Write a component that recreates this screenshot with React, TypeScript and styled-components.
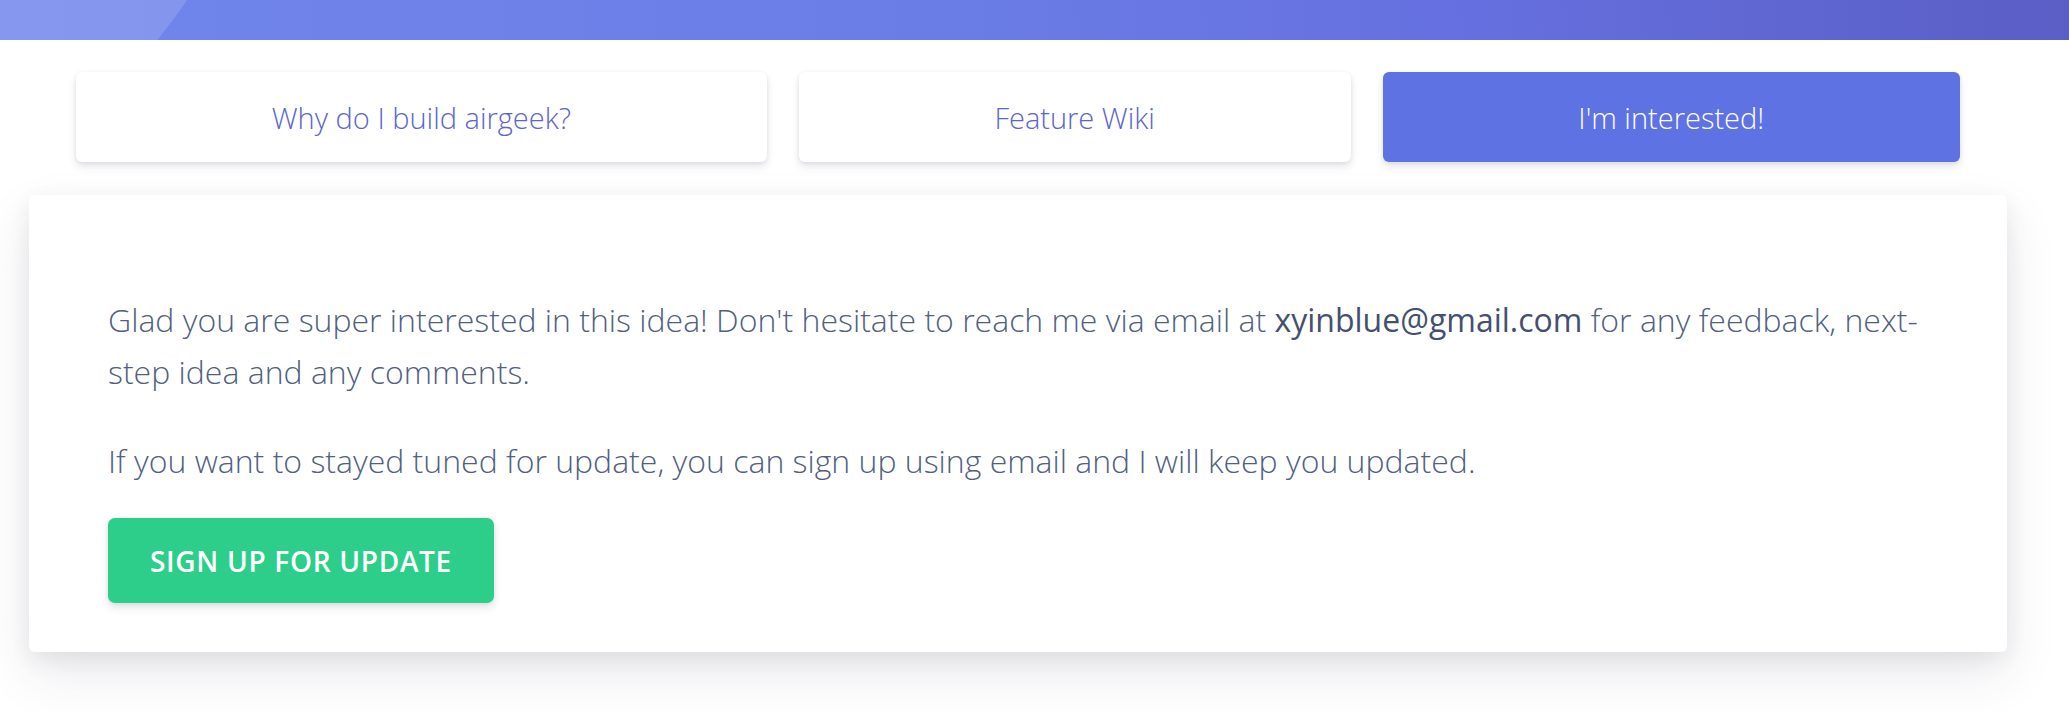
import styled, { createGlobalStyle } from 'styled-components'

const GlobalStyle = createGlobalStyle`
  body {
    margin: 0;
    background: #fff;
    font-family: 'Open Sans', 'Noto Sans', sans-serif;
    color: #525f7f;
  }
`

const Header = styled.div`
  position: relative;
  height: 40px;
  overflow: hidden;
  background: linear-gradient(87deg, #7186ed 0%, #6a7de6 45%, #6670e0 70%, #5a5ec5 100%);
`

const HeaderShape = styled.span`
  position: absolute;
  width: 900px;
  height: 900px;
  border-radius: 50%;
  left: -637px;
  top: -700px;
  background: rgba(255, 255, 255, 0.14);
`

const Section = styled.div`
  padding: 32px 62px 80px 29px;
`

const Tabs = styled.nav`
  display: flex;
  gap: 32px;
  margin: 0 47px 33px;
`

const Tab = styled.a<{ $active?: boolean }>`
  flex: 1 1 auto;
  height: 90px;
  display: flex;
  align-items: center;
  justify-content: center;
  border-radius: 6px;
  font-size: 29px;
  font-weight: 300;
  text-decoration: none;
  cursor: pointer;
  color: ${(p) => (p.$active ? '#fff' : '#5b66cc')};
  background: ${(p) => (p.$active ? '#5e72e4' : '#fff')};
  box-shadow: 0 5px 9px rgba(50, 50, 93, 0.11), 0 1px 4px rgba(0, 0, 0, 0.08);
`

const Card = styled.div`
  background: #fff;
  border-radius: 6px;
  padding: 99px 79px 49px;
  box-shadow: 0 22px 52px rgba(50, 50, 93, 0.1), 0 7px 22px rgba(0, 0, 0, 0.07);
`

const Lead = styled.p`
  margin: 0 0 37px;
  font-size: 32px;
  font-weight: 300;
  line-height: 52px;
  color: #525f7f;
`

const Email = styled.span`
  font-weight: 400;
  color: #45506f;
`

const SignUpButton = styled.button`
  margin-top: -6px;
  height: 85px;
  padding: 0 42px;
  border: none;
  border-radius: 7px;
  background: #2dce89;
  color: #fff;
  font-family: 'Open Sans', 'Noto Sans', sans-serif;
  font-size: 28px;
  font-weight: 600;
  letter-spacing: 0.025em;
  text-transform: uppercase;
  cursor: pointer;
  box-shadow: 0 5px 9px rgba(50, 50, 93, 0.11), 0 1px 4px rgba(0, 0, 0, 0.08);
`

const tabs = [
  { label: 'Why do I build airgeek?' },
  { label: 'Feature Wiki' },
  { label: "I'm interested!", active: true },
]

export default function App() {
  return (
    <>
      <GlobalStyle />
      <Header>
        <HeaderShape />
      </Header>
      <Section>
        <Tabs>
          {tabs.map((t) => (
            <Tab key={t.label} $active={t.active}>
              {t.label}
            </Tab>
          ))}
        </Tabs>
        <Card>
          <Lead>
            Glad you are super interested in this idea! Don't hesitate to reach me via email at{' '}
            <Email>xyinblue@gmail.com</Email> for any feedback, next-step idea and any comments.
          </Lead>
          <Lead>
            If you want to stayed tuned for update, you can sign up using email and I will keep you updated.
          </Lead>
          <SignUpButton>Sign up for update</SignUpButton>
        </Card>
      </Section>
    </>
  )
}
